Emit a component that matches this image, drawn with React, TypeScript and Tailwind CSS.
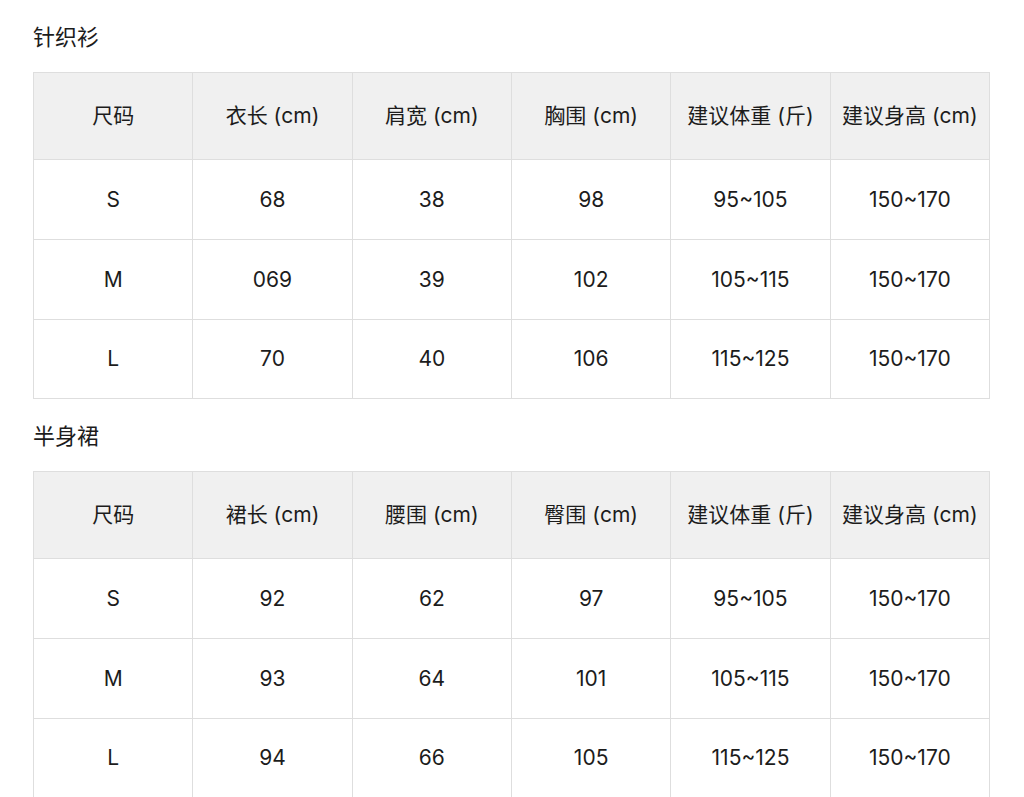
import React from 'react';

const font = { fontFamily: 'Inter, "Noto Sans CJK SC", sans-serif' };

type Section = {
  title: string;
  headers: string[];
  rows: string[][];
};

const sections: Section[] = [
  {
    title: '针织衫',
    headers: ['尺码', '衣长 (cm)', '肩宽 (cm)', '胸围 (cm)', '建议体重 (斤)', '建议身高 (cm)'],
    rows: [
      ['S', '68', '38', '98', '95~105', '150~170'],
      ['M', '069', '39', '102', '105~115', '150~170'],
      ['L', '70', '40', '106', '115~125', '150~170'],
    ],
  },
  {
    title: '半身裙',
    headers: ['尺码', '裙长 (cm)', '腰围 (cm)', '臀围 (cm)', '建议体重 (斤)', '建议身高 (cm)'],
    rows: [
      ['S', '92', '62', '97', '95~105', '150~170'],
      ['M', '93', '64', '101', '105~115', '150~170'],
      ['L', '94', '66', '105', '115~125', '150~170'],
    ],
  },
];

function SizeTable({ section }: { section: Section }) {
  return (
    <div className="mt-[22px]">
      <h2 className="text-[22px] leading-[30px] font-normal text-[#1c1c1c] mb-[20px]">{section.title}</h2>
      <table className="w-[957px] table-fixed border-collapse text-[21px] text-[#1c1c1c]">
        <thead>
          <tr className="h-[87px] bg-[#f0f0f0]">
            {section.headers.map((h) => (
              <th key={h} className="border border-[#dedede] font-normal text-center px-0 whitespace-nowrap">
                {h}
              </th>
            ))}
          </tr>
        </thead>
        <tbody>
          {section.rows.map((row, i) => (
            <tr key={i} className={i === 2 ? 'h-[79px]' : 'h-[80px]'}>
              {row.map((cell, j) => (
                <td key={j} className="border border-[#dedede] text-center">
                  {cell}
                </td>
              ))}
            </tr>
          ))}
        </tbody>
      </table>
    </div>
  );
}

export default function App() {
  return (
    <div className="w-[1024px] h-[797px] overflow-hidden bg-white pl-[33px]" style={font}>
      {sections.map((s) => (
        <SizeTable key={s.title} section={s} />
      ))}
    </div>
  );
}
